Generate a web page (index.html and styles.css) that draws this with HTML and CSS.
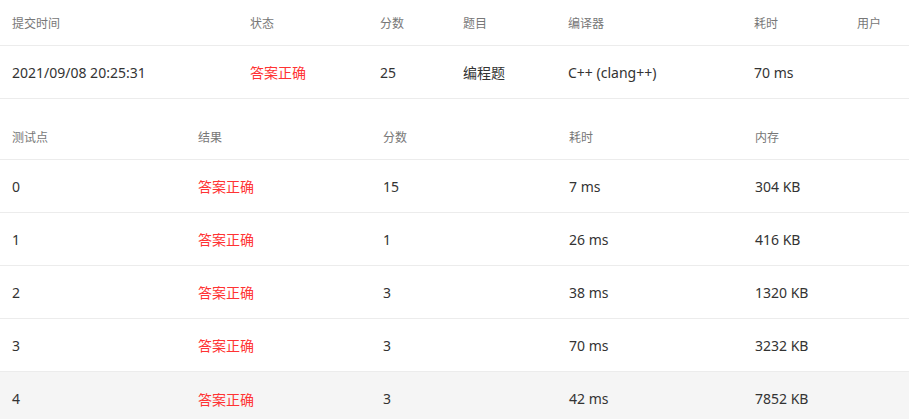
FILE: index.html
```html
<!DOCTYPE html>
<html lang="zh">
<head>
<meta charset="utf-8">
<link rel="stylesheet" href="styles.css">
</head>
<body>
<div class="tbl summary">
  <div class="row head">
    <div>提交时间</div><div>状态</div><div>分数</div><div>题目</div><div>编译器</div><div>耗时</div><div>用户</div>
  </div>
  <div class="row">
    <div>2021/09/08 20:25:31</div><div class="ok">答案正确</div><div>25</div><div>编程题</div><div>C++ (clang++)</div><div>70 ms</div><div></div>
  </div>
</div>
<div class="tbl cases">
  <div class="row head">
    <div>测试点</div><div>结果</div><div>分数</div><div>耗时</div><div>内存</div>
  </div>
  <div class="row"><div>0</div><div class="ok">答案正确</div><div>15</div><div>7 ms</div><div>304 KB</div></div>
  <div class="row"><div>1</div><div class="ok">答案正确</div><div>1</div><div>26 ms</div><div>416 KB</div></div>
  <div class="row"><div>2</div><div class="ok">答案正确</div><div>3</div><div>38 ms</div><div>1320 KB</div></div>
  <div class="row"><div>3</div><div class="ok">答案正确</div><div>3</div><div>70 ms</div><div>3232 KB</div></div>
  <div class="row hover"><div>4</div><div class="ok">答案正确</div><div>3</div><div>42 ms</div><div>7852 KB</div></div>
</div>
</body>
</html>
```

FILE: styles.css
```css
* { box-sizing: border-box; }
html, body { margin: 0; padding: 0; background: #fff; }
body {
  font-family: "Noto Sans", "Noto Sans CJK SC", sans-serif;
  font-size: 14px;
  color: #333;
}
.row {
  display: grid;
  height: 53px;
  align-items: center;
  border-bottom: 1px solid #ececec;
}
.row > div { padding-left: 12px; white-space: nowrap; }
.row.head {
  height: 46px;
  font-size: 12px;
  color: #777;
}
.summary .row { grid-template-columns: 238px 130px 83px 105px 186px 103px 1fr; }
.cases { margin-top: 15px; }
.cases .row { grid-template-columns: 186px 185px 186px 186px 1fr; }
.ok { color: #ff3333; }
.row.hover { background: #f5f5f5; border-bottom: none; }
```
